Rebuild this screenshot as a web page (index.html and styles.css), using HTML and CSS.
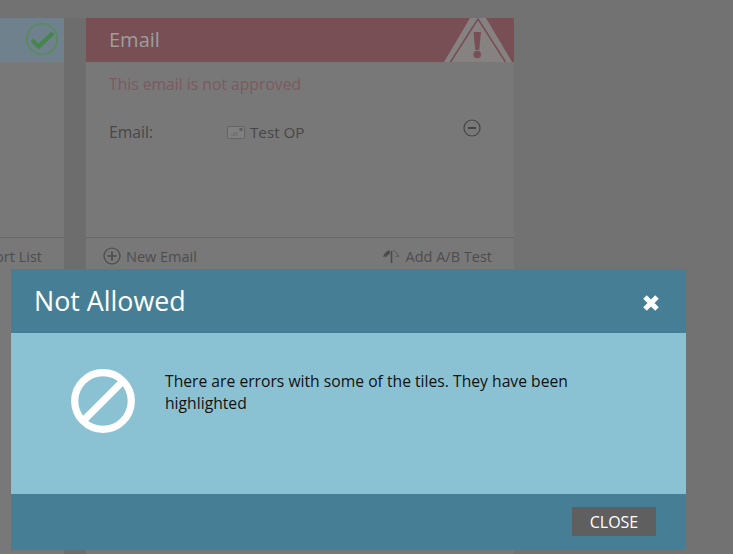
FILE: index.html
```html
<!DOCTYPE html>
<html lang="en">
<head>
  <meta charset="UTF-8">
  <meta name="viewport" content="width=device-width, initial-scale=1.0">
  <title>Not Allowed</title>
  <link rel="stylesheet" href="styles.css">
</head>
<body>
  <!-- tiles behind the mask -->
  <div class="canvas">
    <section class="tile tile-ok">
      <div class="tile-head">
        <svg class="check" width="34" height="34" viewBox="0 0 34 34">
          <circle cx="17" cy="17" r="15.2" fill="none" stroke="#558c58" stroke-width="1.6"/>
          <path d="M7 18l6.500 6.500L28 11" fill="none" stroke="#46854b" stroke-width="4.200"/>
        </svg>
      </div>
      <div class="tile-body"></div>
      <div class="tile-foot">
        <span class="foot-link foot-right">Import List</span>
      </div>
    </section>
    <section class="tile tile-error">
      <div class="tile-head">
        <span class="tile-title">Email</span>
        <svg class="warn" width="72" height="44" viewBox="0 0 72 44">
          <path d="M2 44L28 0H44L70 44Z" fill="#878282"/>
          <path d="M8.500 44L36 1L63.500 44" fill="none" stroke="#774f54" stroke-width="1.600"/>
          <path d="M31.500 14H39L37.300 32H33.200Z" fill="#774f54"/>
          <circle cx="35.200" cy="36.500" r="3.800" fill="#774f54"/>
        </svg>
      </div>
      <div class="tile-body">
        <p class="tile-msg">This email is not approved</p>
        <div class="tile-row">
          <span class="row-label">Email:</span>
          <span class="row-value">
            <svg width="18" height="13" viewBox="0 0 18 13">
              <rect x=".5" y=".5" width="17" height="12" rx="1" fill="#808080" stroke="#636363"/>
              <path d="M4 9h7M6 7h5" stroke="#6a6a6a"/>
              <rect x="12.500" y="2" width="3" height="3" fill="#5e5e5e"/>
            </svg>
            <span class="value-text">Test OP</span>
          </span>
          <svg class="minus" width="18" height="18" viewBox="0 0 18 18">
            <circle cx="9" cy="9" r="8" fill="none" stroke="#444" stroke-width="1.200"/>
            <path d="M5 9h8" stroke="#444" stroke-width="2"/>
          </svg>
        </div>
      </div>
      <div class="tile-foot">
        <span class="foot-link">
          <svg width="18" height="18" viewBox="0 0 18 18">
            <circle cx="9" cy="9" r="8" fill="none" stroke="#4a4a4a" stroke-width="1.200"/>
            <path d="M4.500 9h9M9 4.500v9" stroke="#4a4a4a" stroke-width="1.600"/>
          </svg>
          New Email
        </span>
        <span class="foot-link">
          <svg width="18" height="16" viewBox="0 0 18 16">
            <path d="M7.500 2C4.500 3 2 5.500 1 9c1.500-.8 2.500-.8 3.500 0C5 7.500 6.500 6 8 6Z" fill="#4a4a4a"/>
            <path d="M11 2.500c2.500.8 4.500 3 5.500 6-1-.6-2-.6-3 0" fill="none" stroke="#555"/>
            <path d="M9.500 3v12" stroke="#4a4a4a" stroke-width="1.600"/>
          </svg>
          Add A/B Test
        </span>
      </div>
    </section>
  </div>

  <div class="modal">
    <div class="modal-head">
      <h1>Not Allowed</h1>
      <svg class="modal-x" width="18" height="18" viewBox="0 0 18 18">
        <path d="M3 3L15 15M15 3L3 15" stroke="#fff" stroke-width="5"/>
      </svg>
    </div>
    <div class="modal-body">
      <svg class="modal-icon" width="64" height="64" viewBox="0 0 64 64">
        <circle cx="32" cy="32" r="28.300" fill="none" stroke="#fff" stroke-width="7.200"/>
        <path d="M12 52L52 12" stroke="#fff" stroke-width="7.200"/>
      </svg>
      <p>There are errors with some of the tiles. They have been highlighted</p>
    </div>
    <div class="modal-foot">
      <button class="btn-close">CLOSE</button>
    </div>
  </div>
</body>
</html>
```

FILE: styles.css
```css
* {
  margin: 0;
  padding: 0;
  box-sizing: border-box;
}
html, body {
  height: 100%;
}
body {
  position: relative;
  overflow: hidden;
  background-color: #727272;
  font-family: "Open Sans", "Noto Sans", sans-serif;
}
.canvas {
  display: flex;
  height: 100%;
  padding-top: 18px;
  margin-left: -364px;
}
.tile {
  width: 428px;
  height: 536px;
  display: flex;
  flex-direction: column;
  background-color: #787878;
}
.tile-ok {
  width: 450px;
  border-right: 22px solid #6d6d6d;
}
.tile-head {
  position: relative;
  height: 44px;
  flex: none;
  padding-left: 23px;
}
.tile-ok .tile-head {
  background-color: #6f818c;
}
.tile-error .tile-head {
  background-color: #774f54;
}
.tile-title {
  font-size: 20px;
  line-height: 44px;
  color: #9e9e9e;
}
.check {
  position: absolute;
  top: 4px;
  right: 5px;
}
.warn {
  position: absolute;
  top: 0;
  right: 0;
}
.tile-body {
  height: 175px;
  flex: none;
  padding: 10px 23px 0;
}
.tile-msg {
  font-size: 15.7px;
  line-height: 24px;
  color: #7e585e;
}
.tile-row {
  display: flex;
  align-items: center;
  margin-top: 24px;
  font-size: 15.7px;
  line-height: 24px;
  color: #474747;
}
.row-label {
  width: 118px;
}
.row-value {
  display: flex;
  align-items: center;
  gap: 5px;
  flex: 1;
}
.value-text {
  font-size: 15.2px;
}
.minus {
  margin: -8px 10px 0 0;
}
.tile-foot {
  display: flex;
  justify-content: space-between;
  height: 40px;
  padding: 8px 22px 0 17px;
  border-top: 1px solid #676767;
}
.foot-link {
  display: flex;
  align-items: center;
  gap: 5px;
  height: 20px;
  font-size: 14.5px;
  color: #4d4d4d;
}
.foot-right {
  margin-left: auto;
}
.modal {
  position: absolute;
  top: 269px;
  left: 11px;
  width: 675px;
  height: 281px;
  display: flex;
  flex-direction: column;
}
.modal-head {
  display: flex;
  align-items: center;
  justify-content: space-between;
  height: 64px;
  padding: 0 26px 0 23px;
  background-color: #467f95;
}
.modal-head h1 {
  font-size: 26.8px;
  font-weight: 400;
  line-height: 62px;
  color: #fff;
}
.modal-x {
  margin-top: 4px;
}
.modal-body {
  flex: 1;
  display: flex;
  align-items: flex-start;
  padding: 36px 100px 0 60px;
  gap: 30px;
  background-color: #8bc2d3;
}
.modal-icon {
  flex: none;
}
.modal-body p {
  font-size: 15.7px;
  line-height: 22px;
  margin-top: 1px;
  color: #111;
}
.modal-foot {
  display: flex;
  justify-content: flex-end;
  height: 56px;
  padding: 13px 30px 0 0;
  background-color: #467f95;
}
.btn-close {
  width: 84px;
  height: 29px;
  border: 0;
  background-color: #5f5f5f;
  font-family: inherit;
  font-size: 16px;
  color: #fff;
}
```
